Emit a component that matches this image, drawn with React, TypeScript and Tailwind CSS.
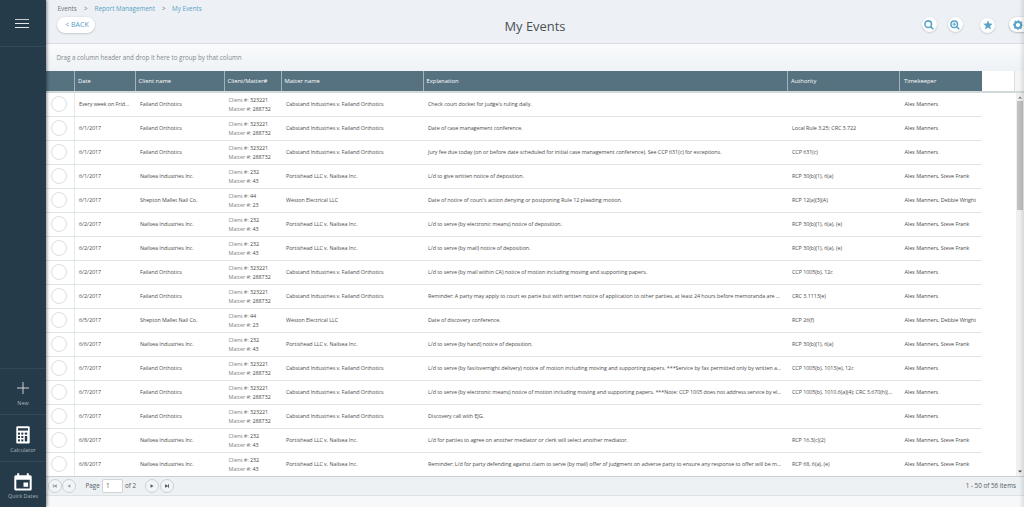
import React from "react";

type Row = [date: string, client: string, clientNo: string, matterNo: string, matter: string, explanation: string, authority: string, keeper: string];

const FO = "Failand Orthotics";
const NI = "Nailsea Industries Inc.";
const SM = "Shepton Mallet Nail Co.";
const CAB = "Cabstand Industries v. Failand Orthotics";
const POR = "Portishead LLC v. Nailsea Inc.";
const WES = "Weston Electrical LLC";
const AM = "Alex Manners";
const AS = "Alex Manners, Steve Frank";
const AD = "Alex Manners, Debbie Wright";

const rows: Row[] = [
  ["Every week on Frid...", FO, "323221", "288732", CAB, "Check court docket for judge's ruling daily.", "", AM],
  ["6/1/2017", FO, "323221", "288732", CAB, "Date of case management conference.", "Local Rule 3.25; CRC 3.722", AM],
  ["6/1/2017", FO, "323221", "288732", CAB, "Jury fee due today (on or before date scheduled for initial case management conference). See CCP 631(c) for exceptions.", "CCP 631(c)", AM],
  ["6/1/2017", NI, "232", "43", POR, "L/d to give written notice of deposition.", "RCP 30(b)(1), 6(a)", AS],
  ["6/1/2017", SM, "44", "23", WES, "Date of notice of court's action denying or postponing Rule 12 pleading motion.", "RCP 12(a)(3)(A)", AD],
  ["6/2/2017", NI, "232", "43", POR, "L/d to serve (by electronic means) notice of deposition.", "RCP 30(b)(1), 6(a), (e)", AS],
  ["6/2/2017", NI, "232", "43", POR, "L/d to serve (by mail) notice of deposition.", "RCP 30(b)(1), 6(a), (e)", AS],
  ["6/2/2017", FO, "323221", "288732", CAB, "L/d to serve (by mail within CA) notice of motion including moving and supporting papers.", "CCP 1005(b), 12c", AM],
  ["6/2/2017", FO, "323221", "288732", CAB, "Reminder: A party may apply to court ex parte but with written notice of application to other parties, at least 24 hours before memoranda are ...", "CRC 3.1113(e)", AM],
  ["6/5/2017", SM, "44", "23", WES, "Date of discovery conference.", "RCP 26(f)", AD],
  ["6/6/2017", NI, "232", "43", POR, "L/d to serve (by hand) notice of deposition.", "RCP 30(b)(1), 6(a)", AS],
  ["6/7/2017", FO, "323221", "288732", CAB, "L/d to serve (by fax/overnight delivery) notice of motion including moving and supporting papers. ***Service by fax permitted only by written a...", "CCP 1005(b), 1013(e), 12c", AM],
  ["6/7/2017", FO, "323221", "288732", CAB, "L/d to serve (by electronic means) notice of motion including moving and supporting papers. ***Note: CCP 1005 does not address service by el...", "CCP 1005(b), 1010.6(a)(4); CRC 3.670(h)(...", AM],
  ["6/7/2017", FO, "323221", "288732", CAB, "Discovery call with EJG.", "", AM],
  ["6/8/2017", NI, "232", "43", POR, "L/d for parties to agree on another mediator or clerk will select another mediator.", "RCP 16.3(c)(2)", AS],
  ["6/8/2017", NI, "232", "43", POR, "Reminder: L/d for party defending against claim to serve (by mail) offer of judgment on adverse party to ensure any response to offer will be m...", "RCP 68, 6(a), (e)", AS],
];

const columns = "grid grid-cols-[29px_60.5px_89px_57px_142px_364.5px_112px_82px]";

const headings = ["", "Date", "Client name", "Client/Matter#", "Matter name", "Explanation", "Authority", "Timekeeper"];

function SideItem({ label, children }: { label: string; children: React.ReactNode }) {
  return (
    <div className="flex h-[46.5px] flex-col items-center border-t border-[#304858]">
      <div className="flex h-[30px] w-full items-end justify-center">{children}</div>
      <span className="mt-[0.5px] text-[5.4px] leading-[8px] text-[#a9b4bc]">{label}</span>
    </div>
  );
}

function Sidebar() {
  return (
    <aside className="z-10 flex w-[46px] shrink-0 flex-col bg-[#263b49] shadow-[1px_0_3px_rgba(0,0,0,0.45)]">
      <div className="flex h-[47px] items-center justify-center border-b border-[#304858]">
        <div className="ml-[-2px] flex w-[14px] flex-col gap-[3px]">
          <i className="h-px bg-[#c8cfd4]" />
          <i className="h-px bg-[#e3e7ea]" />
          <i className="h-px bg-[#e3e7ea]" />
        </div>
      </div>
      <div className="grow" />
      <SideItem label="New">
        <svg className="mb-[5px]" width="12" height="12" viewBox="0 0 12 12" stroke="#dde2e5" strokeWidth="0.9">
          <path d="M6 0v12M0 6h12" />
        </svg>
      </SideItem>
      <SideItem label="Calculator">
        <svg className="mb-[1px]" width="14" height="18" viewBox="0 0 14 18">
          <rect x="0.3" y="0.3" width="13.4" height="17.2" rx="1.2" fill="#fff" />
          <g fill="#263b49">
            <rect x="2" y="2.2" width="10" height="2.4" />
            <rect x="2" y="6.6" width="2" height="2" />
            <rect x="5.3" y="6.6" width="2" height="2" />
            <rect x="8.8" y="6.6" width="2.4" height="2" />
            <rect x="2" y="10" width="2" height="2" />
            <rect x="5.3" y="10" width="2" height="2" />
            <rect x="2" y="13.4" width="2" height="2" />
            <rect x="5.3" y="13.4" width="2" height="2" />
            <rect x="8.8" y="10" width="2.4" height="5.4" />
          </g>
        </svg>
      </SideItem>
      <SideItem label="Quick Dates">
        <svg className="mb-[1px]" width="18" height="18" viewBox="0 0 18 18">
          <path fill="#fff" fillRule="evenodd" d="M3.2.3h2v2h7.6v-2h2v2h1.4q1.5 0 1.5 1.5v12.2q0 1.6-1.5 1.6H1.8Q.3 17.6.3 16V3.8q0-1.5 1.5-1.5h1.4zM2.3 6.7v8.9h13.4V6.7z" />
          <rect x="9.5" y="9.5" width="4.6" height="4.3" fill="#fff" />
        </svg>
      </SideItem>
    </aside>
  );
}

function RoundTool({ children, className = "" }: { children: React.ReactNode; className?: string }) {
  return (
    <div className={`flex size-[15px] shrink-0 items-center justify-center rounded-full bg-white shadow-[0_0.5px_2px_rgba(0,0,0,0.22)] ${className}`}>
      {children}
    </div>
  );
}

function TopBar() {
  return (
    <header className="relative flex h-[44px] shrink-0 flex-col border-b border-[#dadddf] bg-[#edf1f6]">
      <nav className="flex h-[9px] items-center pl-[11.5px] pt-[8.5px] text-[6.3px] leading-[9px] text-[#5a9fc4]">
        <span className="w-[26.5px] text-[#6c7378]">Events</span>
        <span className="w-[10.5px] text-[#6c7378]">&gt;</span>
        <span className="w-[67.5px]">Report Management</span>
        <span className="w-[10px] text-[#6c7378]">&gt;</span>
        <span>My Events</span>
      </nav>
      <div className="flex h-[16px] items-center pl-[11px] pt-[15px]">
        <button className="mt-[0.5px] flex h-[16px] w-[38px] shrink-0 items-center justify-center rounded-full bg-white pl-[2px] text-[7px] text-[#559cc3] shadow-[0_0.5px_2px_rgba(0,0,0,0.25)]">
          &lt; BACK
        </button>
      </div>
      <h1 className="absolute left-[458.5px] top-[17px] text-[12.9px] leading-[19px] text-[#4c4f52]">My Events</h1>
      <div className="absolute left-[875.5px] top-[17px] flex w-[102px]">
        <RoundTool>
          <svg width="10" height="10" viewBox="0 0 10 10" fill="none" stroke="#5aa4cb" strokeWidth="1.6">
            <circle cx="4.2" cy="4.2" r="3.3" />
            <path d="M6.6 6.6 9.3 9.3" />
          </svg>
        </RoundTool>
        <RoundTool className="ml-[11px]">
          <svg width="10" height="10" viewBox="0 0 10 10" fill="none" stroke="#5aa4cb" strokeWidth="1.5">
            <circle cx="4.2" cy="4.2" r="3.3" />
            <path d="M6.6 6.6 9.3 9.3" />
            <path d="M4.2 2.5v3.4M2.5 4.2h3.4" strokeWidth="1" />
          </svg>
        </RoundTool>
        <RoundTool className="ml-[17.5px] mt-[0.5px]">
          <svg width="10" height="10" viewBox="0 0 10 10" fill="#5aa4cb">
            <path d="M5 .3 6.3 3.6 9.8 3.8 7.1 6 8 9.5 5 7.6 2 9.5 2.9 6 .2 3.8 3.7 3.6z" />
          </svg>
        </RoundTool>
        <div className="ml-[13.5px] flex h-[15px] w-[19px] shrink-0 items-center rounded-l-full bg-white pl-[4px] shadow-[0_0.5px_2px_rgba(0,0,0,0.35)]">
          <svg className="shrink-0" width="10" height="10" viewBox="0 0 10 10" fill="none" stroke="#5aa4cb">
            <circle cx="5" cy="5" r="3.1" strokeWidth="2" />
            <circle cx="5" cy="5" r="4.25" strokeWidth="1.2" strokeDasharray="1.9 1.438" strokeDashoffset="0.95" />
          </svg>
        </div>
      </div>
    </header>
  );
}

function EventRow({ row }: { row: Row }) {
  const [date, client, clientNo, matterNo, matter, explanation, authority, keeper] = row;
  return (
    <div className={`${columns} h-[24px] w-[936px] shrink-0 items-center whitespace-nowrap border-b border-[#dfe6ea]`}>
      <div className="flex h-full items-center border-r border-[#e6eaed] pb-[1px] pl-[5px]">
        <span className="size-[16px] rounded-full border border-[#d9dfe3] bg-white" />
      </div>
      <span className="pb-[2px] pl-[4px]">{date}</span>
      <span className="pb-[2px] pl-[4.5px]">{client}</span>
      <span className="pl-[4px] leading-[9px] text-[#808080]">
        Client #: <b className="font-medium text-[#484848]">{clientNo}</b>
        <br />
        Matter #: <b className="font-medium text-[#484848]">{matterNo}</b>
      </span>
      <span className="pb-[2px] pl-[4.5px]">{matter}</span>
      <span className="pb-[2px] pl-[4.5px]">{explanation}</span>
      <span className="pb-[2px] pl-[4px]">{authority}</span>
      <span className="pb-[2px] pl-[4.5px]">{keeper}</span>
    </div>
  );
}

function PageButton({ d, dim = false }: { d: string; dim?: boolean }) {
  return (
    <span className={`flex size-[14px] shrink-0 items-center justify-center rounded-full border border-[#cbd0d4] bg-[#f2f5f7] ${dim ? "text-[#999da1]" : "text-[#55595d]"}`}>
      <svg width="6" height="6" viewBox="0 0 6 6" fill="currentColor">
        <path d={d} />
      </svg>
    </span>
  );
}

function Pager() {
  return (
    <footer className="flex h-[20px] shrink-0 items-center border-b border-t border-b-[#dfe2e4] border-t-[#c9d1d6] bg-[#edf1f4] pl-[1.5px] pr-[8px] text-[6.3px] text-[#55595d]">
      <PageButton dim d="M.8 1.2h.8v1.6L4.8 1.2v3.6L1.6 3.2v1.6H.8z" />
      <span className="w-[0.5px]" />
      <PageButton dim d="M1.5 3 4.3 1.3v3.4z" />
      <span className="ml-[9.5px] w-[16.5px]">Page</span>
      <span className="flex h-[13.5px] w-[20.5px] items-center rounded-[2px] border border-[#cfd4d7] bg-white pl-[3px]">1</span>
      <span className="ml-[2.5px] w-[20px]">of 2</span>
      <PageButton d="M1.5 1.3 4.6 3 1.5 4.7z" />
      <span className="w-px" />
      <PageButton d="M1 1.2 4 2.8V1.2h.9v3.6H4V3.2L1 4.8z" />
      <span className="ml-auto">1 - 50 of 56 items</span>
    </footer>
  );
}

export default function App() {
  return (
    <div className="relative flex h-[507px] w-[1024px] overflow-hidden bg-[#f6f8fa] font-['Open_Sans',sans-serif]">
      <Sidebar />
      <main className="flex min-w-0 grow flex-col">
        <TopBar />
        <div className="flex h-[27px] shrink-0 items-center bg-linear-to-b from-[#fafbfc] to-[#eef2f6] pl-[10.5px] text-[6.24px] text-[#84898d]">
          Drag a column header and drop it here to group by that column
        </div>
        <div className="flex h-[22px] shrink-0 border-b-2 border-[#d3d8db] bg-[#f5f5f6]">
          <div className={`${columns} w-[936px] items-center bg-[#56717f] text-[5.85px] text-white`}>
            {headings.map((h) => (
              <div key={h} className="flex h-full items-center whitespace-nowrap border-r border-[#a3b2ba] pl-[3px] last:border-r-0 last:pl-[4px]">
                {h}
              </div>
            ))}
          </div>
          <div className="w-[33px] border-r border-[#dedede] bg-white" />
        </div>
        <div className="flex h-[383px] shrink-0 overflow-hidden bg-white">
          <div className="w-[970px] shrink-0 text-[5.4px] leading-[8px] tracking-[-0.058px] text-[#4c4c4c]">
            {rows.map((row, i) => (
              <EventRow key={i} row={row} />
            ))}
          </div>
          <div className="flex w-[8px] flex-col items-center bg-[#f0f0f0] pb-[3px] pt-[3px]">
            <svg width="4" height="3" viewBox="0 0 4 3" fill="#777">
              <path d="M0 2.5 2 .4 4 2.5z" />
            </svg>
            <div className="mt-[2px] h-[109px] w-[6.5px] bg-[#c1c1c1]" />
            <svg className="mt-auto" width="4" height="3" viewBox="0 0 4 3" fill="#444">
              <path d="M0 .4h4L2 2.6z" />
            </svg>
          </div>
        </div>
        <Pager />
      </main>
      <div className="pointer-events-none absolute inset-y-0 right-0 w-[5px] bg-linear-to-r from-transparent to-black/10" />
    </div>
  );
}
